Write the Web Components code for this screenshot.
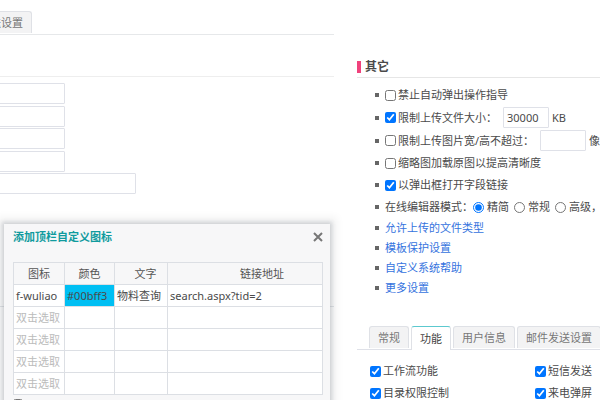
<!DOCTYPE html>
<html lang="zh-CN">
<head>
<meta charset="utf-8">
<title>系统设置</title>
<style>
  body {
    margin: 0;
    overflow: hidden;
    background: #fff;
    color: #4a4a4a;
    font-family: "Noto Sans", "Noto Sans CJK SC", sans-serif;
    font-size: 11px;
    line-height: 16px;
  }
</style>
</head>
<body>
<settings-page></settings-page>

<script>
class SettingsPage extends HTMLElement {
  constructor() {
    super();
    this.attachShadow({ mode: 'open' });
  }

  connectedCallback() {
    this.shadowRoot.innerHTML = `
      <style>
        :host {
          display: grid;
          grid-template-columns: minmax(0, 334fr) minmax(0, 243fr);
          column-gap: 23px;
          position: relative;
          min-height: 100vh;
          overflow: hidden;
        }
        main, aside {
          min-width: 0;
        }
        main {
          padding-top: 11px;
        }
        aside {
          padding-top: 57px;
        }
        .functions {
          margin-top: 28px;
        }
        .options {
          display: grid;
          grid-template-columns: 165px 1fr;
          row-gap: 6px;
          padding: 13px 0 0 13px;
        }
      </style>
      <main>
        <tab-bar class="clipped">
          <tab-item>送设置</tab-item>
        </tab-bar>
        <field-stack></field-stack>
      </main>
      <aside>
        <section-title>其它</section-title>
        <other-settings></other-settings>
        <div class="functions">
          <tab-bar class="inset">
            <tab-item>常规</tab-item>
            <tab-item active>功能</tab-item>
            <tab-item>用户信息</tab-item>
            <tab-item>邮件发送设置</tab-item>
          </tab-bar>
          <div class="options">
            <check-option checked>工作流功能</check-option>
            <check-option checked>短信发送</check-option>
            <check-option checked>目录权限控制</check-option>
            <check-option checked>来电弹屏</check-option>
          </div>
        </div>
      </aside>
      <icon-dialog heading="添加顶栏自定义图标"></icon-dialog>
    `;
  }
}

class TabBar extends HTMLElement {
  constructor() {
    super();
    this.attachShadow({ mode: 'open' });
    this.shadowRoot.innerHTML = `
      <style>
        :host {
          display: flex;
          gap: 2px;
          border-bottom: 1px solid #dfe1e8;
        }
        :host(.inset) {
          padding-left: 12px;
        }
        /* scrolled to the end of the strip */
        :host(.clipped) {
          margin-left: -19px;
          border-bottom-color: #e6e8ea;
        }
      </style>
      <slot></slot>
    `;
  }
}

class TabItem extends HTMLElement {
  constructor() {
    super();
    this.attachShadow({ mode: 'open' });
    this.shadowRoot.innerHTML = `
      <style>
        :host {
          display: block;
          flex: none;
        }
        button {
          display: block;
          height: 22px;
          margin: 0 0 1px;
          padding: 0 8px;
          border: 1px solid #dfe1e6;
          border-bottom: 0;
          border-radius: 3px 3px 0 0;
          background: #f3f3f4;
          color: #777;
          font: inherit;
          white-space: nowrap;
        }
        :host([active]) button {
          height: 24px;
          margin-bottom: -1px;
          border-top-color: #5cc9cf;
          background: #fff;
          color: #444;
        }
      </style>
      <button type="button"><slot></slot></button>
    `;
  }
}

class FieldStack extends HTMLElement {
  constructor() {
    super();
    this.attachShadow({ mode: 'open' });
    this.shadowRoot.innerHTML = `
      <style>
        :host {
          display: flex;
          flex-direction: column;
          gap: 1px;
          margin-top: 41px;
          padding-top: 6px;
          border-top: 1px solid #eee;
        }
        .group {
          display: grid;
          gap: 2px;
          justify-items: start;
        }
        .rule {
          margin: 111px 0 0;
          border: 0;
          border-top: 1px solid #e3e6ea;
        }
        input {
          box-sizing: border-box;
          width: 68px;
          height: 21px;
          margin: 0 0 0 -3px;
          padding: 0 3px;
          border: 1px solid #dfe1e8;
          border-radius: 1px;
          background: #fff;
          font: inherit;
        }
        input.wide {
          width: 139px;
        }
      </style>
      <div class="group">
        <input type="text" aria-label="1">
        <input type="text" aria-label="2">
      </div>
      <div class="group">
        <input type="text" aria-label="3">
        <input type="text" aria-label="4">
      </div>
      <div class="group">
        <input class="wide" type="text" aria-label="5">
      </div>
      <hr class="rule">
    `;
  }
}

class SectionTitle extends HTMLElement {
  constructor() {
    super();
    this.attachShadow({ mode: 'open' });
    this.shadowRoot.innerHTML = `
      <style>
        :host {
          display: block;
          border-bottom: 1px solid #e6e6e6;
        }
        h2 {
          display: flex;
          align-items: center;
          gap: 4px;
          height: 20px;
          margin: 0;
          font-size: 12px;
          font-weight: 700;
        }
        h2::before {
          content: "";
          width: 4px;
          height: 12px;
          background: #f0427c;
        }
      </style>
      <h2><slot></slot></h2>
    `;
  }
}

class CheckOption extends HTMLElement {
  constructor() {
    super();
    this.attachShadow({ mode: 'open' });
  }

  connectedCallback() {
    const checked = this.hasAttribute('checked') ? 'checked' : '';
    this.shadowRoot.innerHTML = `
      <style>
        :host {
          display: block;
          flex: none;
        }
        label {
          display: flex;
          align-items: center;
          gap: 2px;
          white-space: nowrap;
        }
        input {
          flex: none;
          width: 11px;
          height: 11px;
          margin: 0;
        }
      </style>
      <label><input type="checkbox" ${checked}><slot></slot></label>
    `;
  }
}

class OtherSettings extends HTMLElement {
  constructor() {
    super();
    this.attachShadow({ mode: 'open' });
    this.shadowRoot.innerHTML = `
      <style>
        :host {
          display: block;
          padding: 6px 0 0 18px;
        }
        ul {
          margin: 0;
          padding: 0;
          list-style: none;
        }
        li {
          display: flex;
          align-items: center;
          height: 22px;
          white-space: nowrap;
        }
        li::before {
          content: "";
          flex: none;
          width: 4px;
          height: 4px;
          margin-right: 6px;
          background: #666;
        }
        li.field {
          height: 23px;
        }
        .links li {
          height: 20px;
        }
        a {
          color: #3573de;
          text-decoration: none;
        }
        input[type="text"] {
          box-sizing: border-box;
          flex: none;
          width: 46px;
          height: 21px;
          margin: 0 3px 0 6px;
          padding: 0 3px;
          border: 1px solid #dfe1e8;
          border-radius: 1px;
          color: inherit;
          font: inherit;
        }
        .radio {
          display: flex;
          align-items: center;
          gap: 3px;
          margin-right: 5px;
        }
        .radio input {
          width: 11px;
          height: 11px;
          margin: 0;
        }
      </style>
      <ul>
        <li><check-option>禁止自动弹出操作指导</check-option></li>
        <li class="field">
          <check-option checked>限制上传文件大小：</check-option>
          <input type="text" value="30000" aria-label="限制上传文件大小">KB
        </li>
        <li class="field">
          <check-option>限制上传图片宽/高不超过：</check-option>
          <input type="text" aria-label="限制上传图片宽/高不超过">像
        </li>
        <li><check-option>缩略图加载原图以提高清晰度</check-option></li>
        <li><check-option checked>以弹出框打开字段链接</check-option></li>
        <li>
          在线编辑器模式：
          <label class="radio"><input type="radio" name="editor" checked>精简</label>
          <label class="radio"><input type="radio" name="editor">常规</label>
          <label class="radio"><input type="radio" name="editor">高级，</label>
        </li>
      </ul>
      <ul class="links">
        <li><a href="#types">允许上传的文件类型</a></li>
        <li><a href="#template">模板保护设置</a></li>
        <li><a href="#help">自定义系统帮助</a></li>
        <li><a href="#more">更多设置</a></li>
      </ul>
    `;
  }
}

class IconDialog extends HTMLElement {
  constructor() {
    super();
    this.attachShadow({ mode: 'open' });
    this.rows = [
      { icon: 'f-wuliao', color: '#00bff3', text: '物料查询', link: 'search.aspx?tid=2' },
      {}, {}, {}, {}
    ];
  }

  connectedCallback() {
    this.render();
  }

  renderRow(row) {
    if (!row.icon) {
      return '<tr><td class="empty">双击选取</td><td></td><td></td><td></td></tr>';
    }
    return `
      <tr>
        <td>${row.icon}</td>
        <td style="background: ${row.color}">${row.color}</td>
        <td>${row.text}</td>
        <td>${row.link}</td>
      </tr>`;
  }

  render() {
    this.shadowRoot.innerHTML = `
      <style>
        :host {
          display: block;
          position: absolute;
          left: 4px;
          top: 224px;
          box-sizing: border-box;
          width: 326px;
          padding: 0 7px 12px 9px;
          background: #f7f7f8;
          box-shadow: 0 0 4px 2px rgba(60, 75, 90, 0.2), 0 0 8px 7px rgba(0, 0, 0, 0.05);
        }
        header {
          display: flex;
          align-items: center;
          justify-content: space-between;
          height: 26px;
          margin-bottom: 12px;
        }
        h3 {
          margin: 0;
          color: #109b9e;
          font-size: 11px;
          font-weight: 700;
        }
        button {
          display: block;
          padding: 0;
          border: 0;
          background: none;
        }
        svg {
          display: block;
          width: 10px;
          height: 10px;
        }
        table {
          width: 100%;
          table-layout: fixed;
          border-collapse: collapse;
        }
        th, td {
          box-sizing: border-box;
          height: 22px;
          padding: 0 0 0 2px;
          border: 1px solid #dcdfe4;
          text-align: left;
          white-space: nowrap;
        }
        th {
          padding: 0;
          color: #555;
          font-weight: 400;
          text-align: center;
        }
        th.text {
          padding-left: 9px;
        }
        th.link {
          padding-left: 34px;
        }
        td {
          background: #fff;
        }
        td.empty {
          color: #bbb;
        }
        footer {
          padding-top: 4px;
        }
        footer input {
          display: block;
          width: 10px;
          height: 10px;
          margin: 0;
        }
      </style>
      <header>
        <h3>${this.getAttribute('heading')}</h3>
        <button type="button" aria-label="关闭">
          <svg viewBox="0 0 10 10"><path d="M1 1L9 9M9 1L1 9" stroke="#777" stroke-width="2" fill="none"/></svg>
        </button>
      </header>
      <table>
        <colgroup>
          <col style="width: 51px"><col style="width: 50px"><col style="width: 53px"><col>
        </colgroup>
        <thead>
          <tr><th>图标</th><th>颜色</th><th class="text">文字</th><th class="link">链接地址</th></tr>
        </thead>
        <tbody>${this.rows.map(row => this.renderRow(row)).join('')}</tbody>
      </table>
      <footer><input type="checkbox" aria-label="启用"></footer>
    `;
  }
}

customElements.define('tab-bar', TabBar);
customElements.define('tab-item', TabItem);
customElements.define('field-stack', FieldStack);
customElements.define('section-title', SectionTitle);
customElements.define('check-option', CheckOption);
customElements.define('other-settings', OtherSettings);
customElements.define('icon-dialog', IconDialog);
customElements.define('settings-page', SettingsPage);
</script>
</body>
</html>
